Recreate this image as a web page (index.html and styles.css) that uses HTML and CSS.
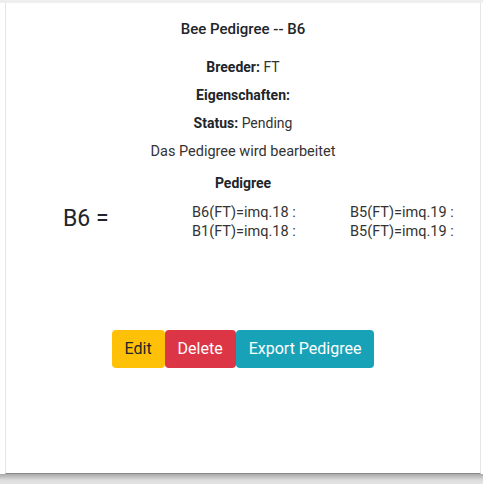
FILE: index.html
```html
<!DOCTYPE html>
<html>
<head>
<meta charset="utf-8">
<link rel="stylesheet" href="styles.css">
</head>
<body>
<div class="page">
  <div class="card">
    <h1 class="title">Bee Pedigree -- B6</h1>
    <div class="info">
      <p class="line"><b>Breeder:</b> FT</p>
      <p class="line"><b>Eigenschaften:</b></p>
      <p class="line"><b>Status:</b> Pending</p>
      <p class="line note">Das Pedigree wird bearbeitet</p>
    </div>
    <h2 class="section">Pedigree</h2>
    <div class="pedigree">
      <div class="name">B6 =</div>
      <div class="cell">B6(FT)=imq.18 :</div>
      <div class="cell">B5(FT)=imq.19 :</div>
      <div class="cell">B1(FT)=imq.18 :</div>
      <div class="cell">B5(FT)=imq.19 :</div>
    </div>
    <div class="actions">
      <button class="btn btn-warning">Edit</button><button class="btn btn-danger">Delete</button><button class="btn btn-info">Export Pedigree</button>
    </div>
  </div>
  <div class="shelf"></div>
</div>
</body>
</html>
```
FILE: styles.css
```css
* { box-sizing: border-box; }
html, body {
  margin: 0;
  padding: 0;
  background: #ffffff;
  font-family: Roboto, "Liberation Sans", sans-serif;
  color: #212529;
}
.page {
  width: 483px;
  height: 484px;
  border-top: 3px solid #eeeeee;
  overflow: hidden;
}
.card {
  margin-left: 5px;
  width: 476px;
  height: 471px;
  background: #ffffff;
  border-left: 1px solid #e6e6e6;
  border-right: 1px solid #e6e6e6;
  border-bottom: 1px solid #8a8a8a;
  display: flex;
  flex-direction: column;
  align-items: center;
  padding-top: 16px;
}
.shelf {
  height: 10px;
  background: linear-gradient(#a8a8a8, #dcdcdc 60%, #e4e4e4);
}
.title {
  margin: 0 0 18px;
  font-size: 15px;
  font-weight: 500;
  line-height: 20px;
}
.info {
  display: flex;
  flex-direction: column;
  align-items: center;
  gap: 8px;
}
.line {
  margin: 0;
  font-size: 14px;
  line-height: 20px;
  color: #333;
}
.line.note { font-size: 14.5px; margin-top: 1px; }
.line b { color: #212529; font-weight: 700; }
.section {
  margin: 11px 0 0;
  font-size: 14px;
  font-weight: 700;
  line-height: 20px;
}
.pedigree {
  align-self: stretch;
  margin-top: 10px;
  display: grid;
  grid-template-columns: 129px 158px auto;
  grid-template-rows: 19px 19px;
  padding-left: 57px;
  font-size: 14.5px;
  color: #333;
}
.name {
  grid-row: 1 / 3;
  font-size: 23px;
  line-height: 26px;
  align-self: center;
  color: #212529;
  margin-top: -7px;
}
.cell { line-height: 19px; }
.actions {
  margin-top: 89px;
  display: flex;
}
.btn {
  font-family: Roboto, "Liberation Sans", sans-serif;
  font-size: 16px;
  line-height: 24px;
  padding: 6px 12px;
  border: 1px solid transparent;
  border-radius: 4px;
  height: 38px;
  margin: 0;
  cursor: pointer;
}
.btn-warning { background: #ffc107; color: #212529; }
.btn-danger { background: #dc3545; color: #fff; }
.btn-info { background: #17a2b8; color: #fff; }
```
